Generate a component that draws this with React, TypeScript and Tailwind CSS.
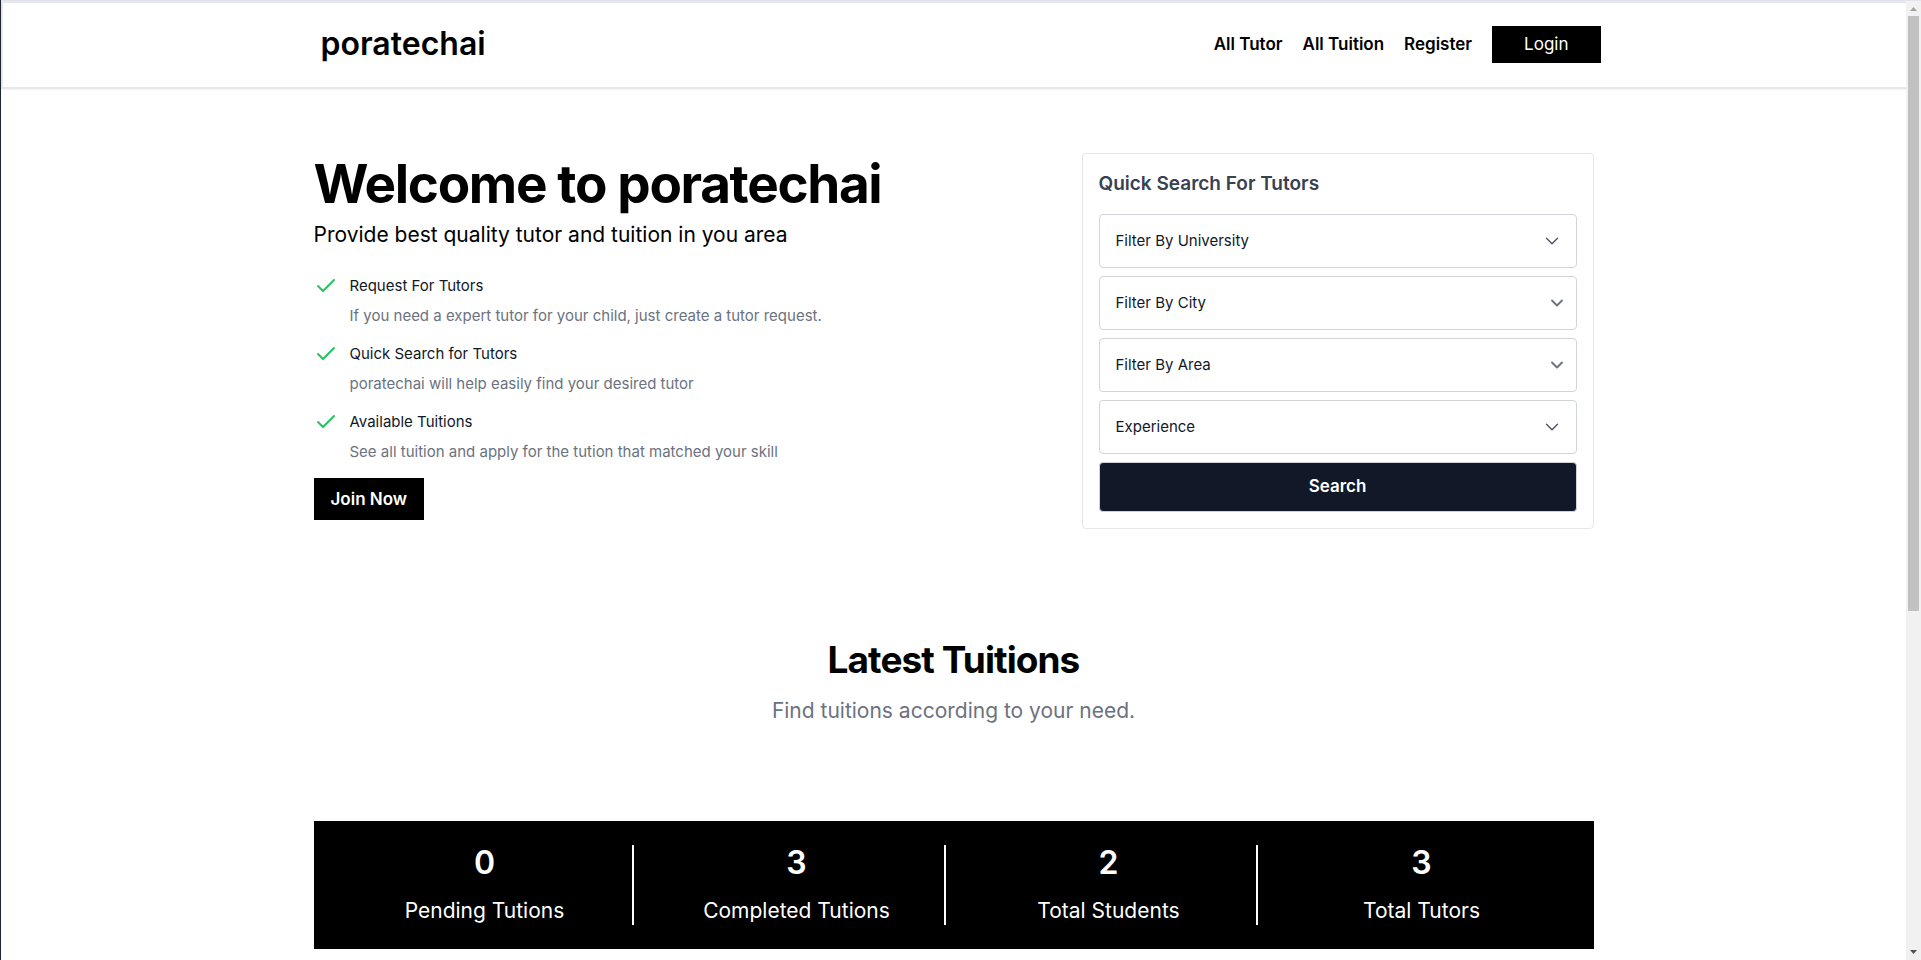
import { Check, ChevronDown } from 'lucide-react';

const navLinks = ['All Tutor', 'All Tuition', 'Register'];

const features = [
  {
    title: 'Request For Tutors',
    text: 'If you need a expert tutor for your child, just create a tutor request.',
  },
  {
    title: 'Quick Search for Tutors',
    text: 'poratechai will help easily find your desired tutor',
  },
  {
    title: 'Available Tuitions',
    text: 'See all tuition and apply for the tution that matched your skill',
  },
];

const filters = [
  { id: 'university', label: 'Filter By University', native: false },
  { id: 'city', label: 'Filter By City', native: true },
  { id: 'area', label: 'Filter By Area', native: true },
  { id: 'experience', label: 'Experience', native: false },
];

const stats = [
  { value: 0, label: 'Pending Tutions' },
  { value: 3, label: 'Completed Tutions' },
  { value: 2, label: 'Total Students' },
  { value: 3, label: 'Total Tutors' },
];

function Header() {
  return (
    <header className="border-y-2 border-l-2 border-[#e5e7eb] bg-white pl-3 shadow-xs">
      <div className="mx-auto flex h-[84px] max-w-7xl items-center justify-between pb-0.5">
        <a href="#" className="text-[32px] leading-9 font-semibold">
          poratechai
        </a>
        <nav className="flex items-center gap-5">
          {navLinks.map((link) => (
            <a key={link} href="#" className="text-[17px] leading-6 font-semibold">
              {link}
            </a>
          ))}
          <button type="button" className="h-[37px] bg-black px-8 text-[17px] leading-6 text-white">
            Login
          </button>
        </nav>
      </div>
    </header>
  );
}

function Intro() {
  return (
    <section>
      <h1 className="text-[53px] leading-[62px] font-bold tracking-tight">Welcome to poratechai</h1>
      <p className="mt-1 text-[21px] leading-8">Provide best quality tutor and tuition in you area</p>
      <ul className="mt-5 flex flex-col gap-2">
        {features.map((feature) => (
          <li key={feature.title} className="flex gap-3">
            <Check className="mt-[3px] size-6 shrink-0 text-[#22c55e]" strokeWidth={2} />
            <div className="text-[15px] leading-[30px]">
              <h2 className="text-[#111827]">{feature.title}</h2>
              <p className="text-[#6b7280]">{feature.text}</p>
            </div>
          </li>
        ))}
      </ul>
      <button
        type="button"
        className="mt-[11px] h-[42px] bg-black px-[17px] text-[17px] leading-6 font-semibold text-white"
      >
        Join Now
      </button>
    </section>
  );
}

function QuickSearch() {
  return (
    <form className="flex w-full max-w-[512px] flex-col gap-2 rounded border border-[#e5e7eb] p-4">
      <h2 className="mb-2 text-[19px] leading-7 font-semibold text-[#374151]">Quick Search For Tutors</h2>
      {filters.map((filter) => (
        <div key={filter.id} className="grid items-center">
          <select
            id={filter.id}
            aria-label={filter.label}
            className="col-start-1 row-start-1 h-[54px] w-full appearance-none rounded border border-[#d1d5db] bg-white px-4 text-[15px] text-[#111827]"
          >
            <option>{filter.label}</option>
          </select>
          <ChevronDown
            className={
              filter.native
                ? 'pointer-events-none col-start-1 row-start-1 mr-2.5 size-5 justify-self-end text-[#6b7280]'
                : 'pointer-events-none col-start-1 row-start-1 mr-3.5 size-[22px] justify-self-end text-[#4b5563]'
            }
            strokeWidth={filter.native ? 2.25 : 1.5}
          />
        </div>
      ))}
      <button
        type="submit"
        className="h-[50px] rounded border border-[#d1d5db] bg-[#111827] pb-0.5 text-[17px] leading-6 font-semibold text-white"
      >
        Search
      </button>
    </form>
  );
}

function Stats() {
  return (
    <dl className="mt-24 grid grid-cols-4 gap-4 bg-black p-6 text-center text-white">
      {stats.map((stat) => (
        <div
          key={stat.label}
          className="flex flex-col-reverse gap-4 border-r-2 border-white last:border-r-0"
        >
          <dt className="text-[21px] leading-7">{stat.label}</dt>
          <dd className="text-[32px] leading-9 font-semibold">{stat.value}</dd>
        </div>
      ))}
    </dl>
  );
}

function ScrollBar() {
  return (
    <div aria-hidden="true" className="flex w-[15px] shrink-0 flex-col items-center bg-[#f1f1f1]">
      <svg viewBox="0 0 15 15" className="h-[15px] w-full shrink-0">
        <path d="M4 10h7L7.500 6z" fill="#a3a3a3" />
      </svg>
      <div className="h-[62%] w-[11px] bg-[#c1c1c1]" />
      <svg viewBox="0 0 15 15" className="mt-auto h-[15px] w-full shrink-0">
        <path d="M4 5h7L7.500 9z" fill="#505050" />
      </svg>
    </div>
  );
}

export default function App() {
  return (
    <div className="flex h-screen flex-col overflow-hidden border-l border-[#1f2430] bg-white font-['Inter',sans-serif] text-black">
      <div className="h-px shrink-0 bg-[#e2e5f0]" />
      <div className="flex min-h-0 flex-1">
        <div className="min-w-0 flex-1 overflow-hidden">
          <Header />
          <main className="mx-auto max-w-7xl">
            <div className="flex items-start justify-between pt-16">
              <Intro />
              <QuickSearch />
            </div>
            <section className="mt-27 text-center">
              <h2 className="text-[37px] leading-[46px] font-bold tracking-tight">Latest Tuitions</h2>
              <p className="mt-3.5 text-[21px] leading-7 text-[#6b7280]">Find tuitions according to your need.</p>
            </section>
            <Stats />
          </main>
        </div>
        <ScrollBar />
      </div>
    </div>
  );
}
